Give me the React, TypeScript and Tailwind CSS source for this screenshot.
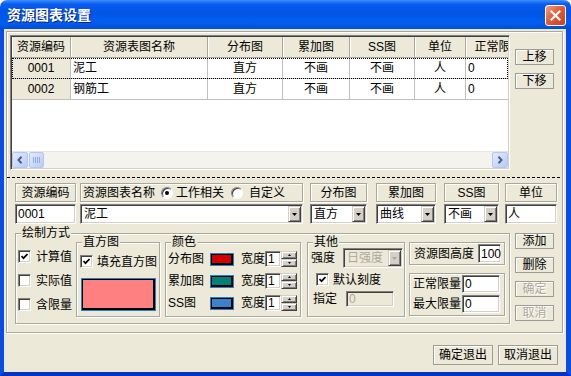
import React from "react";

const sunken =
  "border border-t-[#808080] border-l-[#808080] border-r-white border-b-white shadow-[inset_1px_1px_0_#404040,inset_-1px_-1px_0_#d4d0c8]";
const raised =
  "border border-t-[#d4d0c8] border-l-[#d4d0c8] border-r-[#404040] border-b-[#404040] shadow-[inset_1px_1px_0_#fff,inset_-1px_-1px_0_#808080] bg-[#d4d0c8]";
const etched = "border border-[#aca899] shadow-[inset_1px_1px_0_#fff,1px_1px_0_#fff]";

function Btn({ label, className = "", disabled }: { label: string; className?: string; disabled?: boolean }) {
  return (
    <div
      className={`flex items-center justify-center border border-[#9d9c97] bg-[#ece9d8] shadow-[inset_1px_1px_0_#fff] ${
        disabled ? "text-[#aca899] [text-shadow:1px_1px_0_#fff]" : ""
      } ${className}`}
    >
      {label}
    </div>
  );
}

function Check({ on }: { on?: boolean }) {
  return (
    <span className={`flex h-[13px] w-[13px] shrink-0 items-center justify-center bg-white ${sunken}`}>
      {on && (
        <svg width="7" height="7" viewBox="0 0 7 7">
          <polyline points="0.5,3 2.5,5.2 6.5,1" fill="none" stroke="black" strokeWidth="1.7" />
        </svg>
      )}
    </span>
  );
}

function Radio({ on }: { on?: boolean }) {
  return (
    <span className="flex h-[12px] w-[12px] items-center justify-center rounded-full border border-[#808080] border-r-white border-b-white bg-white shadow-[inset_1px_1px_0_#404040]">
      {on && <span className="h-[4px] w-[4px] rounded-full bg-black" />}
    </span>
  );
}

function Arrow({ grey }: { grey?: boolean }) {
  return (
    <svg width="5" height="3" viewBox="0 0 5 3">
      <polygon points="0,0 5,0 2.5,3" fill={grey ? "#aca899" : "black"} />
    </svg>
  );
}

function Combo({ text, className, disabled }: { text: string; className: string; disabled?: boolean }) {
  return (
    <div className={`flex h-[20px] ${sunken} ${disabled ? "bg-[#ece9d8] text-[#aca899]" : "bg-white"} ${className}`}>
      <span className="flex flex-1 items-center overflow-hidden pl-[3px]">{text}</span>
      <span className={`m-[1px] flex w-[13px] items-center justify-center ${raised}`}>
        <Arrow grey={disabled} />
      </span>
    </div>
  );
}

function Field({ text, className, disabled }: { text: string; className: string; disabled?: boolean }) {
  return (
    <div
      className={`flex items-center pl-[2px] ${sunken} ${disabled ? "bg-[#ece9d8] text-[#aca899]" : "bg-white"} ${className}`}
    >
      {text}
    </div>
  );
}

function Group({ title, className, children }: { title: string; className: string; children?: React.ReactNode }) {
  return (
    <div className={`relative ${etched} ${className}`}>
      <span className="absolute -top-[8px] left-[5px] bg-[#ece9d8] px-[1px] leading-[14px]">{title}</span>
      {children}
    </div>
  );
}

function Swatch({ color, className }: { color: string; className: string }) {
  return (
    <span className={`flex border border-[#1f84c8] ${className}`}>
      <span className="flex-1 border border-r-2 border-b-2 border-black" style={{ background: color }} />
    </span>
  );
}

function Spin() {
  return (
    <span className="flex h-[16px] w-[16px] flex-col">
      <span className={`flex h-[8px] items-center justify-center ${raised}`}>
        <svg width="3" height="2" viewBox="0 0 3 2">
          <polygon points="0,2 3,2 1.5,0" fill="black" />
        </svg>
      </span>
      <span className={`flex h-[8px] items-center justify-center ${raised}`}>
        <svg width="3" height="2" viewBox="0 0 3 2">
          <polygon points="0,0 3,0 1.5,2" fill="black" />
        </svg>
      </span>
    </span>
  );
}

function ScrollBtn({ dir }: { dir: "l" | "r" }) {
  return (
    <span className="flex h-[16px] w-[16px] items-center justify-center rounded-[2px] border border-[#b3c7f3] bg-[linear-gradient(135deg,#e2ebfe,#b7cbf9)]">
      <svg width="6" height="8" viewBox="0 0 6 8">
        <polyline
          points={dir === "l" ? "4.5,0.8 1.5,4 4.5,7.2" : "1.5,0.8 4.5,4 1.5,7.2"}
          fill="none"
          stroke="#4d6185"
          strokeWidth="2"
        />
      </svg>
    </span>
  );
}

const cols = [
  { t: "资源编码", w: "w-[59px]", a: "justify-center" },
  { t: "资源表图名称", w: "w-[137px]", a: "justify-start pl-[2px]" },
  { t: "分布图", w: "w-[75px]", a: "justify-center" },
  { t: "累加图", w: "w-[67px]", a: "justify-center" },
  { t: "SS图", w: "w-[65px]", a: "justify-center" },
  { t: "单位", w: "w-[51px]", a: "justify-center" },
  { t: "正常限量", w: "w-[66px]", a: "justify-start pl-[2px]" },
];

const rows = [
  ["0001", "泥工", "直方", "不画", "不画", "人", "0"],
  ["0002", "钢筋工", "直方", "不画", "不画", "人", "0"],
];

function Table() {
  return (
    <div className={`flex h-[135px] w-[500px] flex-col bg-white ${sunken}`}>
      <div className="m-[1px] flex flex-1 flex-col overflow-hidden">
        <div className="flex-1 overflow-hidden">
          <div className="flex h-[21px]">
            {cols.map((c) => (
              <div
                key={c.t}
                className={`flex shrink-0 items-center justify-center border-r border-b border-[#aca899] bg-[#ece9d8] shadow-[inset_1px_0_0_#fff] ${c.w}`}
              >
                {c.t}
              </div>
            ))}
          </div>
          {rows.map((r, i) => (
            <div key={r[0]} className="relative flex h-[21px]">
              {r.map((v, j) => (
                <div
                  key={j}
                  className={`flex shrink-0 items-center border-r border-b border-[#c0c0c0] ${cols[j].w} ${cols[j].a} ${
                    j === 0 ? "bg-[#ece9d8]" : ""
                  }`}
                >
                  {v}
                </div>
              ))}
              {i === 0 && <div className="absolute left-0 top-0 h-[21px] w-[496px] border border-dotted border-black" />}
            </div>
          ))}
        </div>
        <div className="flex h-[17px] items-center bg-[#f4f3ee] shadow-[inset_0_1px_0_#e6e4dc]">
          <ScrollBtn dir="l" />
          <span className="ml-[1px] flex h-[16px] w-[15px] items-center justify-center gap-[1px] rounded-[2px] border border-[#b3c7f3] bg-[linear-gradient(135deg,#e2ebfe,#b7cbf9)]">
            {[0, 1, 2, 3].map((k) => (
              <span key={k} className="h-[6px] w-[1px] bg-[#8cacf0]" />
            ))}
          </span>
          <span className="flex-1" />
          <ScrollBtn dir="r" />
        </div>
      </div>
    </div>
  );
}

function ColorRow({ label, color }: { label: string; color: string }) {
  return (
    <div className="flex h-[16px] items-center">
      <span className="w-[42px]">{label}</span>
      <Swatch color={color} className="h-[13px] w-[24px]" />
      <span className="ml-[7px] w-[24px]">宽度</span>
      <Field text="1" className="h-[16px] w-[16px]" />
      <Spin />
    </div>
  );
}

export default function App() {
  return (
    <div className="h-[376px] w-[571px] overflow-hidden bg-white font-['Liberation_Sans','Noto_Sans_CJK_SC',sans-serif] text-[12px] leading-[14px] text-black">
      <div className="flex h-[29px] items-start rounded-t-[7px] bg-[linear-gradient(180deg,#3d8ffd_0%,#0a5cf0_14%,#0055e5_45%,#025ef0_80%,#004dd6_100%)] pl-[7px]">
        <span className="mt-[7px] text-[14px] font-bold leading-[16px] text-white [text-shadow:1px_1px_0_#0b1e84]">
          资源图表设置
        </span>
        <span className="ml-auto mr-[5px] mt-[5px] flex h-[21px] w-[21px] items-center justify-center rounded-[3px] border border-white bg-[linear-gradient(135deg,#f3a08a,#e25b3a_45%,#c9401f)]">
          <svg width="11" height="11" viewBox="0 0 11 11">
            <path d="M1.5 1.5 L9.5 9.5 M9.5 1.5 L1.5 9.5" stroke="white" strokeWidth="2.2" strokeLinecap="square" />
          </svg>
        </span>
      </div>
      <div className="flex h-[347px] flex-col border-l-4 border-r-[5px] border-b-4 border-[#0a4de2] border-b-[#0733c4] bg-[#ece9d8]">
        <div className={`ml-[2px] mt-[2px] flex h-[302px] w-[557px] flex-col ${etched}`}>
          <div className="flex pl-[3px] pt-[3px]">
            <Table />
            <div className="ml-[5px] flex flex-col gap-[8px] pt-[14px]">
              <Btn label="上移" className="h-[16px] w-[39px]" />
              <Btn label="下移" className="h-[16px] w-[39px]" />
            </div>
          </div>
          <div className="mt-[7px] h-px bg-[repeating-linear-gradient(90deg,#000_0_3px,transparent_3px_5px)]" />
          <div className="mt-[5px] flex pl-[8px]">
            <div className="flex w-[61px] flex-col">
              <div className={`flex h-[19px] items-center justify-center ${etched}`}>资源编码</div>
              <Field text="0001" className="mt-[2px] h-[20px]" />
            </div>
            <div className="ml-[4px] flex w-[223px] flex-col">
              <div className={`flex h-[19px] items-center pl-[2px] ${etched}`}>
                <span>资源图表名称</span>
                <span className="ml-[6px]">
                  <Radio on />
                </span>
                <span className="ml-[3px]">工作相关</span>
                <span className="ml-[7px]">
                  <Radio />
                </span>
                <span className="ml-[6px]">自定义</span>
              </div>
              <Combo text="泥工" className="mt-[2px]" />
            </div>
            <div className="ml-[7px] flex w-[57px] flex-col">
              <div className={`flex h-[19px] items-center justify-center ${etched}`}>分布图</div>
              <Combo text="直方" className="mt-[2px]" />
            </div>
            <div className="ml-[9px] flex w-[60px] flex-col">
              <div className={`flex h-[19px] items-center justify-center ${etched}`}>累加图</div>
              <Combo text="曲线" className="mt-[2px]" />
            </div>
            <div className="ml-[8px] flex w-[55px] flex-col">
              <div className={`flex h-[19px] items-center justify-center ${etched}`}>SS图</div>
              <Combo text="不画" className="mt-[2px]" />
            </div>
            <div className="ml-[6px] flex w-[52px] flex-col">
              <div className={`flex h-[19px] items-center justify-center ${etched}`}>单位</div>
              <Field text="人" className="mt-[2px] h-[20px]" />
            </div>
          </div>
          <div className="mt-[9px] flex pl-[8px]">
            <Group title="绘制方式" className="flex h-[91px] w-[495px] pl-[2px] pt-[8px]">
              <div className="flex w-[58px] flex-col gap-[11px] pt-[8px]">
                <div className="flex h-[13px] items-center gap-[5px]">
                  <Check on />
                  <span>计算值</span>
                </div>
                <div className="flex h-[13px] items-center gap-[5px]">
                  <Check />
                  <span>实际值</span>
                </div>
                <div className="flex h-[13px] items-center gap-[5px]">
                  <Check />
                  <span>含限量</span>
                </div>
              </div>
              <Group title="直方图" className="flex h-[75px] w-[84px] flex-col">
                <div className="ml-[3px] mt-[12px] flex h-[13px] items-center gap-[4px]">
                  <Check on />
                  <span>填充直方图</span>
                </div>
                <Swatch color="#ff8080" className="ml-[4px] mt-[10px] h-[33px] w-[75px]" />
              </Group>
              <Group title="颜色" className="ml-[5px] flex h-[75px] w-[136px] flex-col gap-[6px] pl-[2px] pt-[8px]">
                <ColorRow label="分布图" color="#d40000" />
                <ColorRow label="累加图" color="#00827a" />
                <ColorRow label="SS图" color="#3b82cc" />
              </Group>
              <Group title="其他" className="ml-[6px] flex h-[75px] w-[98px] flex-col pt-[5px]">
                <div className="ml-[3px] flex items-center">
                  <span className="w-[32px]">强度</span>
                  <Combo text="日强度" className="w-[60px]" disabled />
                </div>
                <div className="ml-[8px] mt-[5px] flex h-[13px] items-center gap-[4px]">
                  <Check on />
                  <span>默认刻度</span>
                </div>
                <div className="ml-[5px] mt-[5px] flex h-[16px] items-center">
                  <span className="w-[33px]">指定</span>
                  <Field text="0" className="h-[16px] w-[48px]" disabled />
                </div>
              </Group>
              <div className="ml-[4px] flex w-[96px] flex-col">
                <div className={`flex h-[23px] items-center pl-[4px] ${etched}`}>
                  <span>资源图高度</span>
                  <Field text="100" className="ml-[4px] h-[19px] w-[23px]" />
                </div>
                <div className={`mt-[8px] flex h-[43px] flex-col gap-[2px] pl-[3px] pt-[1px] ${etched}`}>
                  <div className="flex h-[18px] items-center">
                    <span className="w-[49px]">正常限量</span>
                    <Field text="0" className="h-[18px] w-[38px]" />
                  </div>
                  <div className="flex h-[18px] items-center">
                    <span className="w-[49px]">最大限量</span>
                    <Field text="0" className="h-[18px] w-[38px]" />
                  </div>
                </div>
              </div>
            </Group>
            <div className="ml-[5px] flex flex-col gap-[8px]">
              <Btn label="添加" className="h-[16px] w-[39px]" />
              <Btn label="删除" className="h-[16px] w-[39px]" />
              <Btn label="确定" className="h-[16px] w-[39px]" disabled />
              <Btn label="取消" className="h-[16px] w-[39px]" disabled />
            </div>
          </div>
        </div>
        <div className="mt-[12px] flex justify-end gap-[5px] pr-[8px]">
          <Btn label="确定退出" className="h-[20px] w-[60px]" />
          <Btn label="取消退出" className="h-[20px] w-[60px]" />
        </div>
      </div>
    </div>
  );
}
